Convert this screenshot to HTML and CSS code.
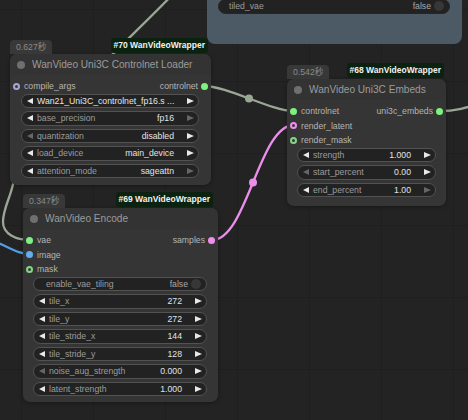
FILE: index.html
```html
<!DOCTYPE html>
<html>
<head>
<meta charset="utf-8">
<link rel="stylesheet" href="styles.css">
</head>
<body>
<div class="canvas">
  <svg class="links" width="468" height="420" viewBox="0 0 468 420">
    <path class="lk sage" d="M175,-8 C130,40 25,130 12,188 C9,200 3,210 3,222 C3,234 16,240 30,240"/>
    <path class="lk blue" d="M-20,237 C8,244 14,254 30,254"/>
    <path class="lk sage" d="M204,86 C227,86 271,111 294,111"/>
    <circle class="mid sagef" cx="249" cy="98.5" r="4"/>
    <path class="lk pink" d="M212,240 C247,240 259,125 294,125"/>
    <circle class="mid pinkf" cx="253" cy="182.5" r="4"/>
    <path class="lk sage" d="M440,111 C462,111 476,104 500,98"/>
  </svg>

  <div class="slate">
    <div class="w toggle slatew"><span class="lbl">tiled_vae</span><span class="val dim">false</span><i class="knob"></i></div>
  </div>

  <div class="wrap n70">
    <div class="head"><span class="time">0.627秒</span><span class="tag">#70 WanVideoWrapper</span></div>
    <div class="node">
      <div class="title"><i class="tdot"></i>WanVideo Uni3C Controlnet Loader</div>
      <div class="slots">
        <div class="row"><div class="in"><i class="dot ring lav"></i>compile_args</div><div class="out">controlnet<i class="dot green"></i></div></div>
      </div>
      <div class="widgets">
        <div class="w"><i class="al"></i><span class="lbl bright">Wan21_Uni3C_controlnet_fp16.s ...</span><i class="ar"></i></div>
        <div class="w"><i class="al"></i><span class="lbl">base_precision</span><span class="val">fp16</span><i class="ar off"></i></div>
        <div class="w"><i class="al off"></i><span class="lbl">quantization</span><span class="val">disabled</span><i class="ar"></i></div>
        <div class="w"><i class="al"></i><span class="lbl">load_device</span><span class="val">main_device</span><i class="ar"></i></div>
        <div class="w"><i class="al"></i><span class="lbl">attention_mode</span><span class="val">sageattn</span><i class="ar off"></i></div>
      </div>
    </div>
  </div>

  <div class="wrap n68">
    <div class="head"><span class="time">0.542秒</span><span class="tag">#68 WanVideoWrapper</span></div>
    <div class="node">
      <div class="title"><i class="tdot"></i>WanVideo Uni3C Embeds</div>
      <div class="slots">
        <div class="row"><div class="in"><i class="dot green"></i>controlnet</div><div class="out">uni3c_embeds<i class="dot green"></i></div></div>
        <div class="row"><div class="in"><i class="dot ring pinkr"></i>render_latent</div></div>
        <div class="row"><div class="in"><i class="dot ring greenr"></i>render_mask</div></div>
      </div>
      <div class="widgets">
        <div class="w"><i class="al"></i><span class="lbl">strength</span><span class="val">1.000</span><i class="ar"></i></div>
        <div class="w"><i class="al off"></i><span class="lbl">start_percent</span><span class="val">0.00</span><i class="ar"></i></div>
        <div class="w"><i class="al"></i><span class="lbl">end_percent</span><span class="val">1.00</span><i class="ar off"></i></div>
      </div>
    </div>
  </div>

  <div class="wrap n69">
    <div class="head"><span class="time">0.347秒</span><span class="tag">#69 WanVideoWrapper</span></div>
    <div class="node">
      <div class="title"><i class="tdot"></i>WanVideo Encode</div>
      <div class="slots">
        <div class="row"><div class="in"><i class="dot green"></i>vae</div><div class="out">samples<i class="dot pink"></i></div></div>
        <div class="row"><div class="in"><i class="dot blue"></i>image</div></div>
        <div class="row"><div class="in"><i class="dot ring greenr"></i>mask</div></div>
      </div>
      <div class="widgets">
        <div class="w toggle"><span class="lbl">enable_vae_tiling</span><span class="val dim">false</span><i class="knob"></i></div>
        <div class="w"><i class="al"></i><span class="lbl">tile_x</span><span class="val">272</span><i class="ar"></i></div>
        <div class="w"><i class="al"></i><span class="lbl">tile_y</span><span class="val">272</span><i class="ar"></i></div>
        <div class="w"><i class="al"></i><span class="lbl">tile_stride_x</span><span class="val">144</span><i class="ar"></i></div>
        <div class="w"><i class="al"></i><span class="lbl">tile_stride_y</span><span class="val">128</span><i class="ar"></i></div>
        <div class="w"><i class="al off"></i><span class="lbl">noise_aug_strength</span><span class="val">0.000</span><i class="ar"></i></div>
        <div class="w"><i class="al"></i><span class="lbl">latent_strength</span><span class="val">1.000</span><i class="ar"></i></div>
      </div>
    </div>
  </div>
</div>
</body>
</html>
```

FILE: styles.css
```css
html, body {
  margin: 0;
  padding: 0;
  background: #222;
}
body {
  font-family: "Liberation Sans", Arial, "Noto Sans CJK SC", sans-serif;
  font-size: 8.7px;
}
.canvas {
  position: relative;
  width: 468px;
  height: 420px;
  overflow: hidden;
  background-color: #232323;
  background-image:
    linear-gradient(90deg, #1f1f1f 1px, transparent 1px),
    linear-gradient(#1f1f1f 1px, transparent 1px);
  background-size: 72px 72px;
  background-position: 21px 9px;
}
.links {
  position: absolute;
  left: 0;
  top: 0;
  z-index: 0;
}
.lk {
  fill: none;
  stroke-width: 2.3;
  stroke-linecap: round;
}
.sage { stroke: #9aa795; }
.blue { stroke: #4f9fe2; }
.pink { stroke: #ea8eea; }
.mid { stroke: none; }
.sagef { fill: #9aa795; }
.pinkf { fill: #ea8eea; }

/* top slate node */
.slate {
  position: absolute;
  left: 207px;
  top: -20px;
  width: 255px;
  height: 64px;
  box-sizing: border-box;
  padding: 19px 12px 0 11px;
  background: #4b5a65;
  border-radius: 0 0 8px 8px;
  z-index: 1;
}
.slatew {
  background: #252525;
  border-color: #252525 !important;
}

/* node wrapper */
.wrap {
  position: absolute;
  z-index: 2;
}
.n70 { left: 10px; top: 38px; width: 201px; }
.n68 { left: 287px; top: 63px; width: 159px; }
.n69 { left: 23px; top: 192px; width: 195px; }

.head {
  height: 16px;
  display: flex;
  justify-content: space-between;
  align-items: flex-start;
  position: relative;
}
.time {
  align-self: flex-end;
  height: 14px;
  line-height: 14px;
  padding: 0 6px;
  background: #383838;
  color: #8a8a8a;
  border-radius: 4px 4px 0 0;
  font-family: "Liberation Sans", "Noto Sans CJK SC", sans-serif;
}
.tag {
  height: 15px;
  line-height: 15px;
  padding: 0 3px;
  margin-right: 3px;
  background: #0c2211;
  color: #f2f2f2;
  font-weight: bold;
  font-size: 8.5px;
  border-radius: 3px;
}
.n69 .tag { margin-right: 5px; }
.n68 .tag { margin-right: 2px; }

.node {
  background: #353535;
  border-radius: 7px;
  box-shadow: 0 1px 4px rgba(0,0,0,0.35);
  padding-bottom: 7px;
}
.n69 .node { padding-bottom: 6px; }
.n68 .node { padding-bottom: 9px; }

.title {
  height: 21px;
  display: flex;
  align-items: center;
  padding-left: 7px;
  color: #9b9b9b;
  font-size: 10.1px;
  background: #333;
  border-radius: 7px 7px 0 0;
}
.tdot {
  width: 8px;
  height: 8px;
  border-radius: 50%;
  background: #6f6f6f;
  margin-right: 7px;
  flex: none;
}

.slots {
  padding-top: 4px;
}
.row {
  height: 14.5px;
  display: flex;
  align-items: center;
  justify-content: space-between;
  color: #b4b4b4;
}
.in, .out {
  display: flex;
  align-items: center;
}
.in { padding-left: 3px; }
.out { padding-right: 3px; margin-left: auto; }
.dot {
  width: 7px;
  height: 7px;
  border-radius: 50%;
  box-sizing: border-box;
  flex: none;
}
.in .dot { margin-right: 4px; }
.out .dot { margin-left: 3px; }
.green { background: #7ef27e; }
.dot.blue { background: #62aef0; }
.dot.pink { background: #f08ef0; }
.ring { border: 2px solid; background: #3a3a3a; }
.lav { border-color: #a5a5d6; }
.greenr { border-color: #86d486; }
.pinkr { border-color: #f08ef0; }

.widgets {
  display: flex;
  flex-direction: column;
  gap: 3px;
  padding: 0 11px 0 10px;
}
.n70 .widgets { padding-left: 11px; padding-right: 12px; }
.n68 .widgets { padding-right: 10px; }

.w {
  height: 14.5px;
  box-sizing: border-box;
  border: 1px solid #525252;
  border-radius: 8px;
  background: #222;
  display: flex;
  align-items: center;
  padding: 0 4px 0 5px;
  white-space: nowrap;
  overflow: hidden;
}
.lbl {
  color: #9c9c9c;
  margin-left: 4px;
  flex: none;
}
.lbl.bright { color: #e6e6e6; flex: 1; }
.val {
  color: #e2e2e2;
  flex: 1;
  text-align: right;
  margin-right: 13px;
}
.val.dim { color: #a8a8a8; margin-right: 3px; }
.al, .ar {
  width: 0;
  height: 0;
  flex: none;
  border-top: 3.5px solid transparent;
  border-bottom: 3.5px solid transparent;
}
.al { border-right: 6px solid #e8e8e8; }
.ar { border-left: 7px solid #e8e8e8; }
.al.off { border-right-color: #666; }
.ar.off { border-left-color: #666; }

.toggle { padding: 0 5px 0 8px; }
.knob {
  width: 10px;
  height: 10px;
  border-radius: 50%;
  background: #373737;
  flex: none;
}
.slatew .lbl { margin-left: 2px; }
```
